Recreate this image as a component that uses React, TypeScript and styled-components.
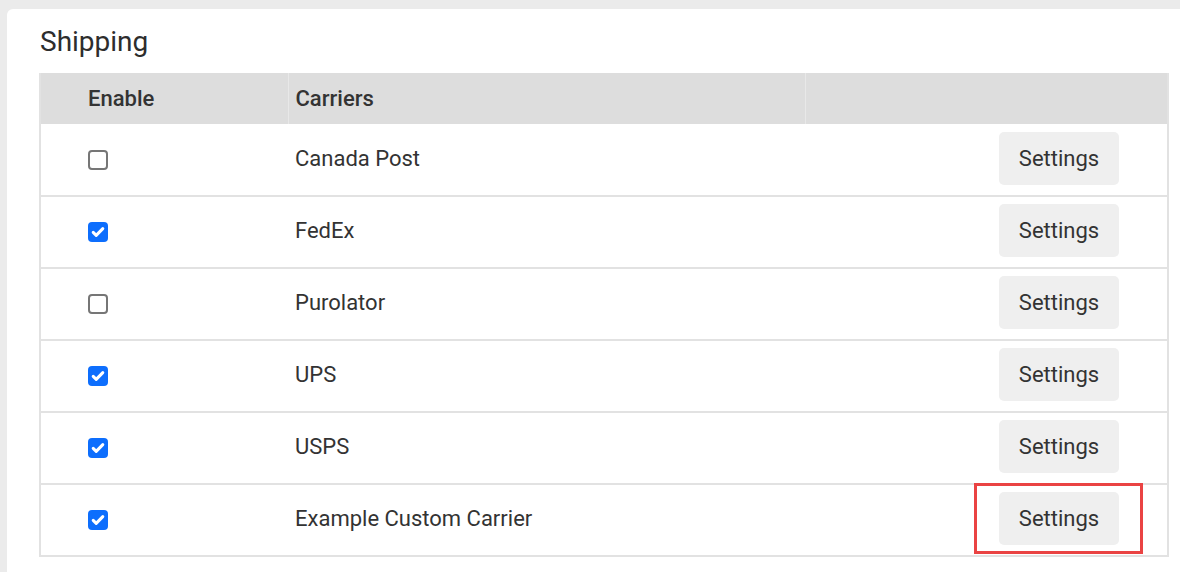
import React from "react";
import styled, { createGlobalStyle } from "styled-components";

const Global = createGlobalStyle`
  html, body { margin: 0; padding: 0; background: #ebebeb; }
  body { font-family: Roboto, "Liberation Sans", Arial, sans-serif; color: #333; }
  * { box-sizing: border-box; }
`;

const Page = styled.div`
  padding: 9px 0 0 7px;
  height: 572px;
  overflow: hidden;
`;

const Card = styled.section`
  background: #fff;
  border-radius: 6px 0 0 0;
  padding: 12px 13px 40px 32px;
  min-height: 563px;
`;

const Title = styled.h2`
  margin: 0 0 11px 1px;
  font-size: 28px;
  font-weight: 400;
  line-height: 41px;
  color: #2d2d2d;
`;

const Table = styled.table`
  width: 1128px;
  border-collapse: collapse;
  table-layout: fixed;
  border: 2px solid #e2e2e2;
  border-top: none;
`;

const HeadCell = styled.th<{ $pl?: number; $w: number }>`
  width: ${(p) => p.$w}px;
  height: 51px;
  background: #dddddd;
  text-align: left;
  font-size: 22px;
  font-weight: 500;
  color: #333;
  padding: 0 0 1px ${(p) => p.$pl ?? 0}px;
  border-left: 1px solid #e8e8e8;
  &:first-child { border-left: none; }
`;

const Row = styled.tr`
  height: 72px;
  border-bottom: 2px solid #e2e2e2;
`;

const Cell = styled.td<{ $pl?: number; $pr?: number; $align?: string }>`
  padding: 0 ${(p) => p.$pr ?? 0}px 3px ${(p) => p.$pl ?? 0}px;
  text-align: ${(p) => p.$align ?? "left"};
  font-size: 22px;
  color: #333;
  vertical-align: middle;
`;

const Box = styled.span<{ $checked: boolean }>`
  display: inline-flex;
  align-items: center;
  justify-content: center;
  width: 20px;
  height: 20px;
  border-radius: 4px;
  vertical-align: middle;
  background: ${(p) => (p.$checked ? "#0d6efd" : "#fff")};
  border: ${(p) => (p.$checked ? "none" : "2px solid #767676")};
`;

const Highlight = styled.span<{ $on: boolean }>`
  position: relative;
  display: inline-block;
  vertical-align: middle;
  &::after {
    content: "";
    display: ${(p) => (p.$on ? "block" : "none")};
    position: absolute;
    top: -9px;
    bottom: -9px;
    left: -25px;
    right: -24px;
    border: 3px solid #ea4343;
    pointer-events: none;
  }
`;

const Button = styled.button`
  display: block;
  width: 120px;
  height: 53px;
  border: none;
  border-radius: 5px;
  background: #efefef;
  font-family: Roboto, "Liberation Sans", Arial, sans-serif;
  font-size: 22px;
  color: #333;
  cursor: pointer;
`;

const Checkbox = ({ checked }: { checked: boolean }) => (
  <Box $checked={checked}>
    {checked && (
      <svg width="16" height="16" viewBox="0 0 16 16">
        <path d="M3.2 8.4l3 3L12.8 4.6" fill="none" stroke="#fff" strokeWidth="3" strokeLinecap="round" strokeLinejoin="round" />
      </svg>
    )}
  </Box>
);

const carriers = [
  { name: "Canada Post", enabled: false },
  { name: "FedEx", enabled: true },
  { name: "Purolator", enabled: false },
  { name: "UPS", enabled: true },
  { name: "USPS", enabled: true },
  { name: "Example Custom Carrier", enabled: true, highlight: true },
];

export default function App() {
  return (
    <Page>
      <Global />
      <Card>
        <Title>Shipping</Title>
        <Table>
          <thead>
            <tr>
              <HeadCell $w={248} $pl={47}>Enable</HeadCell>
              <HeadCell $w={517} $pl={7}>Carriers</HeadCell>
              <HeadCell $w={363} />
            </tr>
          </thead>
          <tbody>
            {carriers.map((c) => (
              <Row key={c.name}>
                <Cell $pl={47}>
                  <Checkbox checked={c.enabled} />
                </Cell>
                <Cell $pl={7}>{c.name}</Cell>
                <Cell $align="right" $pr={48}>
                  <Highlight $on={!!c.highlight}>
                    <Button>Settings</Button>
                  </Highlight>
                </Cell>
              </Row>
            ))}
          </tbody>
        </Table>
      </Card>
    </Page>
  );
}
